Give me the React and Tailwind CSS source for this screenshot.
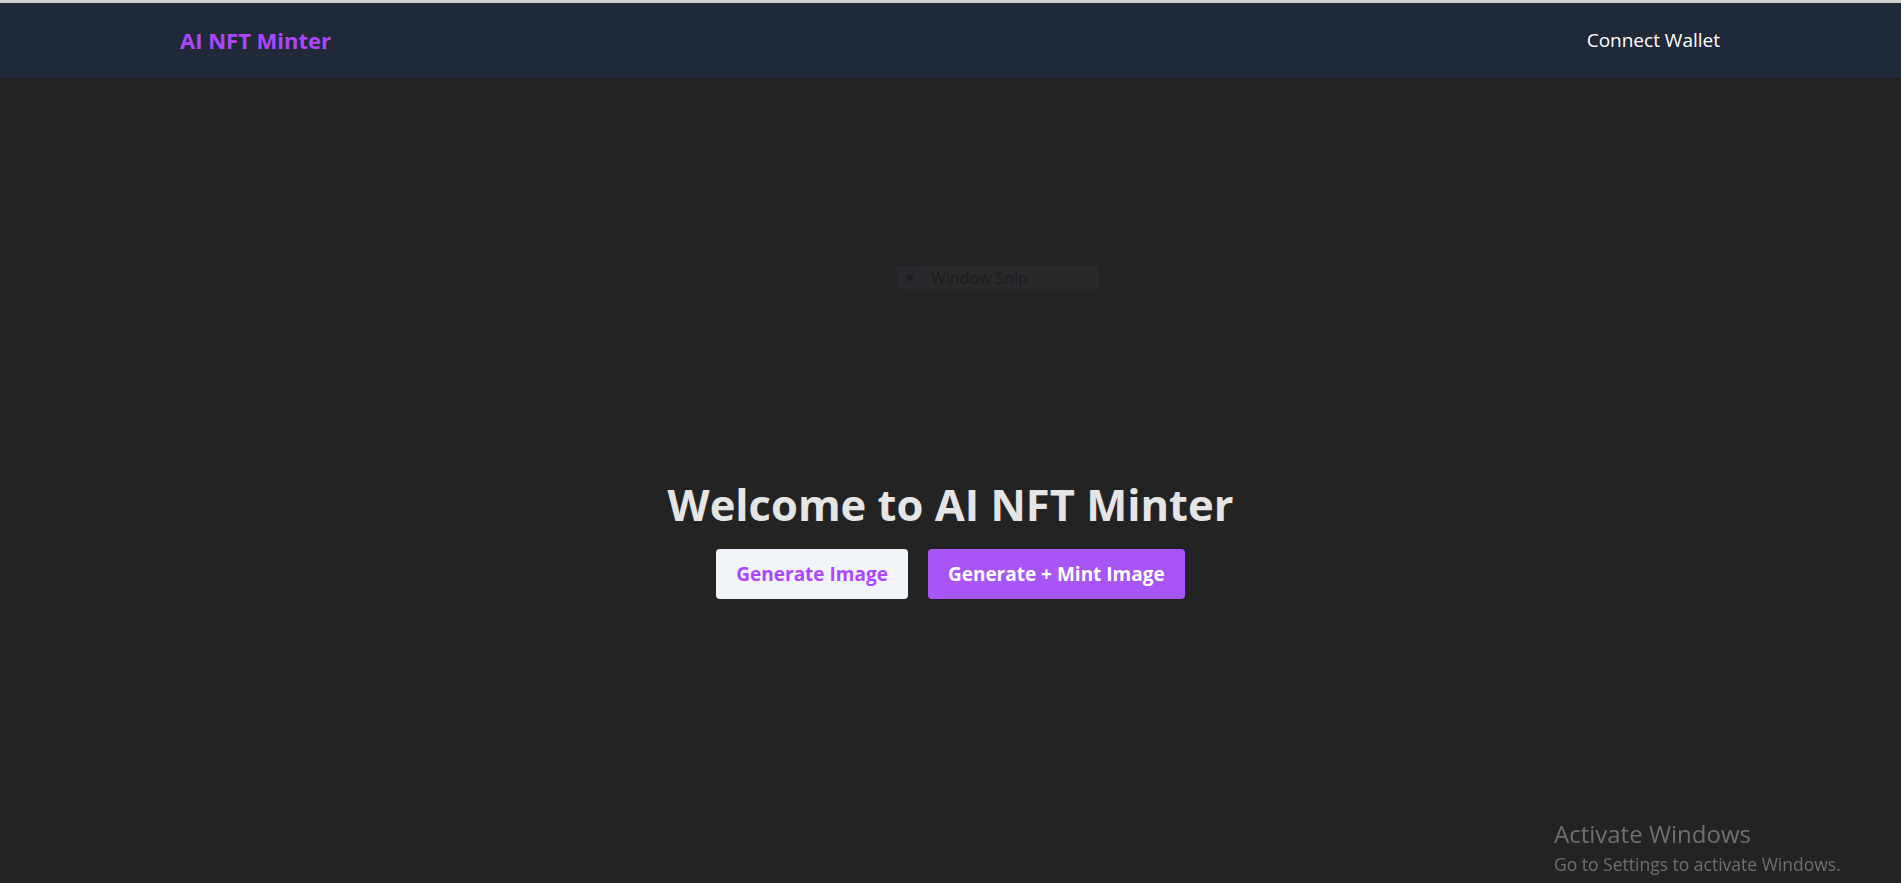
export default function App() {
  return (
    <div
      className="relative min-h-screen bg-[#232323] border-t-[3px] border-[#cfcfcf]"
      style={{ fontFamily: '"Open Sans", "Noto Sans", sans-serif' }}
    >
      <nav className="bg-[#1f2937] h-[75px] flex items-center justify-between pl-[180px] pr-[181px]">
        <span className="text-purple-500 text-[22px] font-bold">AI NFT Minter</span>
        <button className="text-white text-[19px]">Connect Wallet</button>
      </nav>

      <main className="flex flex-col items-center pt-[403px] pb-[200px]">
        <h1 className="text-[#e5e5e5] text-[43.5px] leading-[48px] font-bold">Welcome to AI NFT Minter</h1>
        <div className="flex gap-5 mt-5">
          <button className="h-[50px] px-5 rounded bg-[#f1f5f9] text-purple-500 text-[19px] font-bold">
            Generate Image
          </button>
          <button className="h-[50px] px-5 rounded bg-[#a855f7] text-white text-[19px] font-bold">
            Generate + Mint Image
          </button>
        </div>
      </main>

      {/* faint snip overlay */}
      <div className="absolute left-[897px] top-[263px] w-[202px] h-[23px] bg-[#28292b] flex items-center">
        <div className="w-[24px] h-full bg-[#26282b] flex items-center justify-center">
          <span className="w-[7px] h-[7px] rounded-full bg-[#1e1e1e]" />
        </div>
        <span className="ml-[10px] text-[16px] text-[#1c1c1c]">Window Snip</span>
      </div>

      {/* watermark */}
      <div className="fixed left-[1554px] top-[822px] text-[#6f6f6f] leading-none">
        <div className="text-[24px]">Activate Windows</div>
        <div className="text-[17.5px] mt-[10px]">Go to Settings to activate Windows.</div>
      </div>
    </div>
  );
}
